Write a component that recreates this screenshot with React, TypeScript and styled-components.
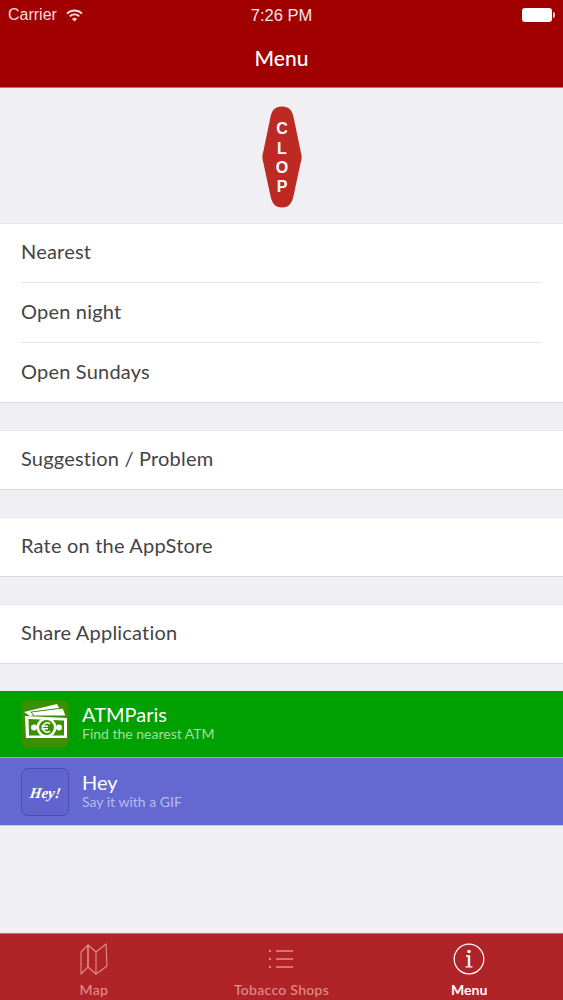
import styled, { createGlobalStyle } from "styled-components";

const GlobalStyle = createGlobalStyle`
  html, body {
    margin: 0;
    padding: 0;
    background: #efeff4;
  }
  * {
    box-sizing: border-box;
  }
`;

const Page = styled.div`
  width: 563px;
  height: 1000px;
  display: flex;
  flex-direction: column;
  overflow: hidden;
  background: #efeff4;
  font-family: Lato, "Open Sans", sans-serif;
`;

const NavBar = styled.header`
  height: 88px;
  flex: none;
  background: #a00000;
  border-bottom: 1px solid #d9686a;
  color: #fff;
`;

const StatusBar = styled.div`
  height: 30px;
  padding: 0 8px;
  display: grid;
  grid-template-columns: 1fr auto 1fr;
  align-items: center;
  font-family: "Liberation Sans", Arial, sans-serif;
  font-size: 16px;
  color: #f6dcdc;
`;

const Carrier = styled.div`
  display: flex;
  align-items: center;
  gap: 9px;
`;

const Clock = styled.div`
  color: #f8e8e8;
  font-size: 16.5px;
`;

const Battery = styled.div`
  justify-self: end;
  position: relative;
  width: 30px;
  height: 14px;
  margin-right: 3px;
  border-radius: 3px;
  background: #fff;
  &::after {
    content: "";
    position: absolute;
    right: -3px;
    top: 4px;
    width: 2px;
    height: 6px;
    border-radius: 0 2px 2px 0;
    background: #f3c9c9;
  }
`;

const Title = styled.div`
  text-align: center;
  font-size: 21px;
  font-weight: 500;
  line-height: 26px;
  margin-top: 15px;
`;

const LogoArea = styled.div`
  height: 135px;
  flex: none;
  display: flex;
  justify-content: center;
  padding-top: 18px;
`;

const Group = styled.div`
  flex: none;
  background: #fff;
  border-top: 1px solid #e8e8ec;
  border-bottom: 1px solid #dcdce0;
  margin-bottom: 27px;
`;

const Row = styled.div`
  height: 58px;
  margin-left: 21px;
  padding-bottom: 4px;
  display: flex;
  align-items: center;
  font-size: 20px;
  letter-spacing: 0.2px;
  color: #444;
  & + & {
    position: relative;
    height: 60px;
    padding-bottom: 2px;
    &::before {
      content: "";
      position: absolute;
      top: 0;
      left: 0;
      right: 21px;
      height: 1px;
      background: #e6e6e6;
    }
  }
`;

const Promo = styled.div<{ $bg: string; $edge: string; $sub: string }>`
  height: 67px;
  flex: none;
  display: flex;
  align-items: center;
  gap: 13px;
  padding-left: 21px;
  background: ${(p) => p.$bg};
  border-bottom: 1px solid ${(p) => p.$edge};
  color: #fff;
  small {
    display: block;
    margin-top: 1px;
    font-size: 14px;
    line-height: 16px;
    color: ${(p) => p.$sub};
  }
  & + & {
    height: 68px;
    padding-top: 1px;
  }
`;

const PromoIcon = styled.div<{ $bg: string; $edge: string }>`
  width: 48px;
  height: 48px;
  flex: none;
  border-radius: 7px;
  background: ${(p) => p.$bg};
  border: 1px solid ${(p) => p.$edge};
  display: flex;
  align-items: center;
  justify-content: center;
`;

const HeyMark = styled.span`
  display: block;
  padding-top: 2px;
  font-family: "Liberation Serif", serif;
  font-style: italic;
  font-weight: 700;
  font-size: 15px;
  color: #fff;
  transform: skewX(-8deg);
`;

const PromoName = styled.div`
  font-size: 20px;
  line-height: 22px;
  margin-top: -3px;
`;

const Spacer = styled.div`
  flex: 1;
`;

const TabBar = styled.nav`
  height: 67px;
  flex: none;
  display: grid;
  grid-template-columns: repeat(3, 1fr);
  background: #b02428;
  border-top: 1px solid #c96a6c;
`;

const Tab = styled.div<{ $active?: boolean }>`
  display: flex;
  flex-direction: column;
  align-items: center;
  padding-top: 9px;
  color: ${(p) => (p.$active ? "#fff" : "#e08d8d")};
  font-size: 14px;
  font-weight: ${(p) => (p.$active ? 700 : 500)};
  letter-spacing: ${(p) => (p.$active ? 0 : 0.3)}px;
  svg {
    height: 32px;
    display: block;
  }
  span {
    margin-top: 6px;
    line-height: 17px;
  }
`;

const Wifi = () => (
  <svg width="17" height="13" viewBox="0 0 17 13" fill="none" stroke="#f6dcdc" strokeWidth="1.9">
    <path d="M1 4.6 A10.6 10.6 0 0 1 16 4.6" />
    <path d="M3.7 7.4 A6.8 6.8 0 0 1 13.3 7.4" />
    <path d="M8.5 12.6 L6 9.9 A3.4 3.4 0 0 1 11 9.9 Z" fill="#f6dcdc" stroke="none" />
  </svg>
);

const Logo = () => (
  <svg width="40" height="102" viewBox="0 0 40 102">
    <path
      d="M20 0.5 C27 0.5 30 4 31.5 11 L38.8 46 Q40.4 51 38.8 56 L31.5 90 C30 97 27 101.5 20 101.5 C13 101.5 10 97 8.5 90 L1.2 56 Q-0.4 51 1.2 46 L8.5 11 C10 4 13 0.5 20 0.5 Z"
      fill="#bd2a24"
    />
    <g fill="#fff" fontFamily="Liberation Sans, Arial, sans-serif" fontWeight="700" fontSize="16" textAnchor="middle">
      <text x="20" y="28">C</text>
      <text x="20" y="48">L</text>
      <text x="20" y="67">O</text>
      <text x="20" y="85.5">P</text>
    </g>
  </svg>
);

const Money = () => (
  <svg width="46" height="46" viewBox="0 0 46 46">
    <path d="M2 11 L35 3 L39 10 L8 15 Z" fill="#fff" />
    <path d="M9 11 L41 7 L44 15 L12 15 Z" fill="#fff" stroke="#3b9000" strokeWidth="1" />
    <path d="M3 15 L45 17 L45 37 L4 37 Z" fill="#fff" />
    <path d="M6.5 18 L42 19.5 L42 34.5 L7 34.5 Z" fill="#3b9000" />
    <circle cx="24.5" cy="26.5" r="10" fill="#fff" />
    <circle cx="12" cy="26.5" r="3" fill="#fff" />
    <circle cx="37" cy="26.5" r="3" fill="#fff" />
    <circle cx="24.5" cy="26.5" r="7.4" fill="#3b9000" />
    <path d="M28 22.8 A4.6 4.6 0 1 0 28 30.2 M19.5 25.3 H26 M19.5 27.7 H26" fill="none" stroke="#fff" strokeWidth="1.5" />
  </svg>
);

const MapIcon = () => (
  <svg width="28" height="32" viewBox="0 0 28 32" fill="none" stroke="currentColor" strokeWidth="1.1" strokeLinejoin="round">
    <path d="M1 9 L8 2 L8 24 L1 31 Z" />
    <path d="M8 2 L16 9 L16 31 L8 24 Z" />
    <path d="M16 9 L26 1 L27 23 L19 29" />
    <path d="M16 31 L19 29" />
  </svg>
);

const ListIcon = () => (
  <svg width="26" height="32" viewBox="0 0 26 32" fill="none" stroke="currentColor" strokeWidth="1.4">
    <path d="M8 8 H25 M8 16 H25 M8 24 H25" />
    <path d="M1 8 H3 M1 16 H3 M1 24 H3" strokeWidth="2" />
  </svg>
);

const InfoIcon = () => (
  <svg width="32" height="32" viewBox="0 0 32 32" fill="none" stroke="currentColor">
    <circle cx="16" cy="16" r="14.8" strokeWidth="1.2" />
    <path d="M16 13 V23.5" strokeWidth="2.4" />
    <path d="M13 13 H17 M12.5 23.8 H19.5" strokeWidth="1.3" />
    <circle cx="16" cy="8.5" r="1.8" fill="currentColor" stroke="none" />
  </svg>
);

export default function App() {
  return (
    <Page>
      <GlobalStyle />
      <NavBar>
        <StatusBar>
          <Carrier>
            Carrier <Wifi />
          </Carrier>
          <Clock>7:26 PM</Clock>
          <Battery />
        </StatusBar>
        <Title>Menu</Title>
      </NavBar>
      <LogoArea>
        <Logo />
      </LogoArea>
      <Group>
        <Row>Nearest</Row>
        <Row>Open night</Row>
        <Row>Open Sundays</Row>
      </Group>
      <Group>
        <Row>Suggestion / Problem</Row>
      </Group>
      <Group>
        <Row>Rate on the AppStore</Row>
      </Group>
      <Group>
        <Row>Share Application</Row>
      </Group>
      <Promo $bg="#00a000" $edge="#7cc47c" $sub="#a5dfa0">
        <PromoIcon $bg="#3b9000" $edge="#2f8f00">
          <Money />
        </PromoIcon>
        <div>
          <PromoName>ATMParis</PromoName>
          <small>Find the nearest ATM</small>
        </div>
      </Promo>
      <Promo $bg="#6469d2" $edge="#c9cbe8" $sub="#b9bceb">
        <PromoIcon $bg="#5f64ce" $edge="#4a4eb0">
          <HeyMark>Hey!</HeyMark>
        </PromoIcon>
        <div>
          <PromoName>Hey</PromoName>
          <small>Say it with a GIF</small>
        </div>
      </Promo>
      <Spacer />
      <TabBar>
        <Tab>
          <MapIcon />
          <span>Map</span>
        </Tab>
        <Tab>
          <ListIcon />
          <span>Tobacco Shops</span>
        </Tab>
        <Tab $active>
          <InfoIcon />
          <span>Menu</span>
        </Tab>
      </TabBar>
    </Page>
  );
}
